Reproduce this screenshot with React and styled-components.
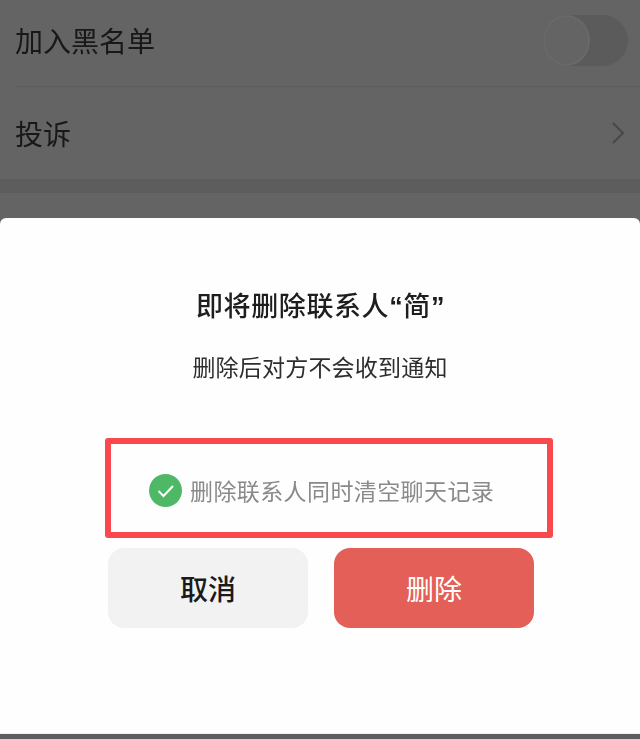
import styled, { createGlobalStyle } from "styled-components";

const GlobalStyle = createGlobalStyle`
  html, body {
    margin: 0;
    padding: 0;
    background: #646464;
  }
  * {
    box-sizing: border-box;
  }
`;

const Page = styled.div`
  width: 640px;
  height: 739px;
  overflow: hidden;
  display: flex;
  flex-direction: column;
  background: #646464;
  font-family: "Noto Sans CJK SC", "Noto Sans", sans-serif;
`;

/* Settings list dimmed behind the dialog */
const SettingsList = styled.section`
  height: 218px;
  display: flex;
  flex-direction: column;
`;

const SettingsRow = styled.div`
  height: ${(p) => p.$height}px;
  margin-left: 15px;
  padding: 0 12px ${(p) => (p.$divider ? 6 : 0)}px 0;
  display: flex;
  align-items: center;
  justify-content: space-between;
  border-bottom: ${(p) => (p.$divider ? "1px solid #5c5c5c" : "none")};
`;

const RowLabel = styled.span`
  font-size: 28px;
  line-height: 40px;
  color: #181818;
  filter: blur(0.4px);
`;

const Toggle = styled.div`
  width: 85px;
  height: 51px;
  border-radius: 26px;
  background: #5b5b5b;
  display: flex;
`;

const ToggleKnob = styled.div`
  width: 47px;
  height: 51px;
  border-radius: 50%;
  background: #646464;
  border: 2px solid #696969;
`;

const Chevron = styled.svg`
  width: 14px;
  height: 22px;
  margin-right: 3px;
  fill: none;
  stroke: #484848;
  stroke-width: 2;
`;

const Band = styled.div`
  height: 14px;
  background: #5d5d5d;
`;

const Sheet = styled.section`
  height: 516px;
  background: #fefefe;
  border-radius: 6px 6px 0 0;
  padding-top: 67px;
  border-bottom: 1px solid #f0f0f0;
`;

const Title = styled.h2`
  margin: 0;
  padding-left: 1px;
  font-size: 27px;
  line-height: 40px;
  font-weight: 500;
  letter-spacing: 0.6px;
  text-align: center;
  color: #1e1e1e;
  filter: blur(0.4px);
`;

const Quote = styled.span`
  font-family: "Liberation Sans", sans-serif;
  font-weight: 700;
`;

const Subtitle = styled.p`
  margin: 23px 0 0;
  font-size: 23px;
  line-height: 32px;
  letter-spacing: 0.2px;
  text-align: center;
  color: #2e2e2e;
  filter: blur(0.4px);
`;

const Body = styled.div`
  margin: 56px 0 0 105px;
  width: 448px;
`;

const OptionFrame = styled.div`
  height: 100px;
  padding: 4px 0 0 38px;
  border: 6px solid #f9484e;
  border-radius: 3px;
  display: flex;
  align-items: center;
  gap: 8px;
`;

const CheckBadge = styled.svg`
  width: 33px;
  height: 33px;
  flex: none;
`;

const OptionText = styled.span`
  font-size: 23px;
  line-height: 32px;
  letter-spacing: 0.4px;
  color: #8a8a8a;
  filter: blur(0.4px);
`;

const Actions = styled.div`
  margin: 10px 0 0 3px;
  display: flex;
  gap: 26px;
`;

const ActionButton = styled.button`
  width: 200px;
  height: 80px;
  padding: 0;
  border: none;
  border-radius: 16px;
  font-family: inherit;
  font-size: 28px;
  font-weight: ${(p) => (p.$danger ? 400 : 500)};
  background: ${(p) => (p.$danger ? "#e45f57" : "#f2f2f2")};
  color: ${(p) => (p.$danger ? "#ffffff" : "#1a1a1a")};
`;

const BottomEdge = styled.div`
  height: 5px;
  background: #5e5e5e;
`;

export default function App() {
  return (
    <>
      <GlobalStyle />
      <Page>
        <SettingsList>
          <SettingsRow $height={87} $divider>
            <RowLabel>加入黑名单</RowLabel>
            <Toggle>
              <ToggleKnob />
            </Toggle>
          </SettingsRow>
          <SettingsRow $height={92}>
            <RowLabel>投诉</RowLabel>
            <Chevron viewBox="0 0 14 22">
              <path d="M2 1 L12 11 L2 21" />
            </Chevron>
          </SettingsRow>
          <Band />
        </SettingsList>

        <Sheet>
          <Title>
            即将删除联系人<Quote>“</Quote>简<Quote>”</Quote>
          </Title>
          <Subtitle>删除后对方不会收到通知</Subtitle>
          <Body>
            <OptionFrame>
              <CheckBadge viewBox="0 0 33 33">
                <circle cx="16.5" cy="16.5" r="16.5" fill="#4fb866" />
                <path d="M9.5 17 L14.5 22 L24 12" fill="none" stroke="#ffffff" strokeWidth="2" />
              </CheckBadge>
              <OptionText>删除联系人同时清空聊天记录</OptionText>
            </OptionFrame>
            <Actions>
              <ActionButton>取消</ActionButton>
              <ActionButton $danger>删除</ActionButton>
            </Actions>
          </Body>
        </Sheet>
        <BottomEdge />
      </Page>
    </>
  );
}
